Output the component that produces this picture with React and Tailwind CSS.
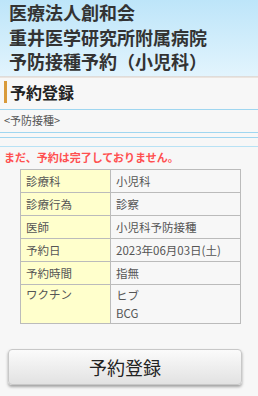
export default function App() {
  const rows = [
    ["診療科", ["小児科"]],
    ["診療行為", ["診察"]],
    ["医師", ["小児科予防接種"]],
    ["予約日", ["2023年06月03日(土)"]],
    ["予約時間", ["指無"]],
  ];
  return (
    <div className="w-[258px] h-[396px] overflow-hidden bg-[#f7f7f7] font-['Noto_Sans_CJK_JP',sans-serif]">
      <div className="h-[76px] bg-gradient-to-b from-[#bde5f9] to-[#e2f4fd] pl-[9px] text-[18px] leading-[24.5px] font-bold text-[#333]">
        <div>医療法人創和会</div>
        <div>重井医学研究所附属病院</div>
        <div>予防接種予約（小児科）</div>
      </div>
      <div className="h-[2px] bg-gradient-to-b from-[#d8d8d8] to-[#f2e8e0]"></div>
      <div className="pt-[3px] pl-[4px]">
        <div className="border-l-[3px] border-[#d99a3a] pl-[3px] text-[16px] leading-[22px] font-bold text-[#222]">予約登録</div>
      </div>
      <div className="mt-[6px] h-[1px] bg-[#9fd6f0]"></div>
      <div className="pl-[4px] pt-[2px] h-[22px] text-[11px] leading-[16px] text-[#555]">&lt;予防接種&gt;</div>
      <div className="h-[1px] bg-[#9fd6f0]"></div>
      <div className="mt-[4px] h-[1px] bg-[#9fd6f0]"></div>
      <div className="mt-[8px] h-[1px] bg-[#b8e2f5]"></div>
      <div className="pl-[4px] pt-[2px] h-[22px] text-[11px] leading-[16px] font-bold text-[#ff5050]">まだ、予約は完了しておりません。</div>
      <div className="pl-[20px]">
        <table className="w-[221px] border-collapse text-[11.5px] text-[#555]">
          <tbody>
            {rows.map(([k, v]) => (
              <tr key={k}>
                <td className="w-[90px] h-[23px] border border-[#bbb] bg-[#ffffcc] px-[5px] py-0 leading-[21px] align-middle">{k}</td>
                <td className="h-[23px] border border-[#bbb] px-[5px] py-0 leading-[21px] align-middle">{v[0]}</td>
              </tr>
            ))}
            <tr>
              <td className="w-[90px] h-[39px] border border-[#bbb] bg-[#ffffcc] px-[5px] pt-[1px] pb-0 leading-[17px] align-top">ワクチン</td>
              <td className="h-[39px] border border-[#bbb] px-[5px] pt-[1px] pb-0 leading-[18px] align-top">
                <div>ヒブ</div>
                <div>BCG</div>
              </td>
            </tr>
          </tbody>
        </table>
      </div>
      <div className="pl-[8px] pt-[25px]">
        <button className="w-[234px] h-[36px] rounded-[4px] border border-[#c8c8c8] bg-gradient-to-b from-[#fbfbfb] to-[#e2e2e2] shadow-[0_2px_3px_rgba(0,0,0,0.35)] text-[18px] text-[#222]">予約登録</button>
      </div>
    </div>
  );
}
